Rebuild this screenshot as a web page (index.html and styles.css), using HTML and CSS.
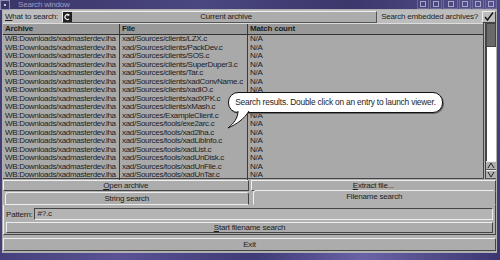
FILE: index.html
```html
<!DOCTYPE html>
<html lang="en">
<head>
  <meta charset="UTF-8" />
  <title>Search window</title>
  <link rel="stylesheet" href="styles.css">
</head>
<body>
  <div class="window">
    <header class="titlebar">
      <span class="close-gadget"><span></span></span>
      <span class="title">Search window</span>
      <div class="gadgets">
        <span class="gadget"><span class="g-mark"></span></span>
        <span class="gadget"><span class="g-mark"></span></span>
        <span class="gadget wide"><span class="g-mark"></span></span>
        <span class="gadget"><span class="g-mark"></span></span>
        <span class="gadget"><span class="g-mark"></span></span>
        <span class="gadget"><span class="g-mark"></span></span>
      </div>
    </header>

    <main class="content">
      <div class="search-row">
        <span class="label"><u>W</u>hat to search:</span>
        <div class="cycle">
          <svg class="cycle-icon" width="9" height="10" viewBox="0 0 9 10">
            <rect x="0" y="0" width="9" height="10" fill="#222"/>
            <path d="M6 3 A2.5 2.5 0 1 0 6 7" stroke="#eee" stroke-width="1.2" fill="none"/>
            <path d="M4.5 1.5 L7 3 L4.5 4.5 Z" fill="#eee"/>
          </svg>
          <span class="cycle-label">Current archive</span>
        </div>
        <span class="label">Search embedded archives?</span>
        <span class="checkbox">
          <svg width="10" height="9" viewBox="0 0 10 9">
            <path d="M1 5 L3.5 8 L9 0.5" stroke="#111" stroke-width="1.4" fill="none"/>
          </svg>
        </span>
      </div>

      <section class="results">
        <div class="list">
          <div class="row head">
            <span>Archive</span><span>File</span><span>Match count</span>
          </div>
          <div id="rows"></div>
        </div>
        <div class="scrollbar">
          <div class="knob"></div>
          <div class="track"></div>
          <div class="arrow">
            <svg width="8" height="7" viewBox="0 0 8 7"><path d="M1 6 L4 1 L7 6" stroke="#222" fill="none"/></svg>
          </div>
          <div class="arrow">
            <svg width="8" height="7" viewBox="0 0 8 7"><path d="M1 1 L4 6 L7 1" stroke="#222" fill="none"/></svg>
          </div>
        </div>
        <div class="bubble">Search results. Double click on an entry to launch viewer.</div>
        <svg class="bubble-tail" width="26" height="18" viewBox="0 0 26 18">
          <path d="M11 0 C11 7 7 12 1 17 C10 13 17 8 22 0 Z" fill="#fff"/>
          <path d="M11 0 C11 7 7 12 1 17 C10 13 17 8 22 0" stroke="#111" fill="none"/>
        </svg>
      </section>

      <div class="button-row">
        <button class="btn"><u>O</u>pen archive</button>
        <button class="btn"><u>E</u>xtract file...</button>
      </div>

      <div class="tabs">
        <div class="tab">String search</div>
        <div class="tab active">Filename search</div>
      </div>
      <div class="tab-panel">
        <div class="pattern-row">
          <span class="label">Pattern:</span>
          <div class="string-field">#?.c</div>
        </div>
        <button class="btn start"><u>S</u>tart filename search</button>
      </div>

      <button class="btn exit">Exit</button>
    </main>
  </div>

  <script>
    const archive = "WB:Downloads/xadmasterdev.lha";
    const files = [
      "clients/LZX.c", "clients/PackDev.c", "clients/SOS.c", "clients/SuperDuper3.c",
      "clients/Tar.c", "clients/xadConvName.c", "clients/xadIO.c", "clients/xadXPK.c",
      "clients/xMash.c", "ExampleClient.c", "tools/exe2arc.c", "tools/xad2lha.c",
      "tools/xadLibInfo.c", "tools/xadList.c", "tools/xadUnDisk.c", "tools/xadUnFile.c",
      "tools/xadUnTar.c"
    ];
    const rows = document.getElementById("rows");

    files.forEach(file => {
      const row = document.createElement("div");
      row.className = "row";
      row.innerHTML = `<span>${archive}</span><span>xad/Sources/${file}</span><span>N/A</span>`;
      rows.appendChild(row);
    });
  </script>
</body>
</html>
```

FILE: styles.css
```css
body {
  margin: 0;
  width: 500px;
  height: 260px;
  overflow: hidden;
  font-family: "Liberation Sans", Arial, sans-serif;
  font-size: 8px;
  letter-spacing: -0.2px;
  color: #1c1c1c;
  background: linear-gradient(100deg, #3d3972 0%, #5a5294 30%, #3f3a78 55%, #6a63a6 75%, #3b3670 100%);
}

.window {
  margin: 0 3px 0 2px;
}

.titlebar {
  height: 9px;
  display: flex;
  align-items: center;
  background: linear-gradient(90deg, #3a3668, #4a4680 40%, #3c386c 70%, #55518c);
}

.close-gadget {
  width: 8px;
  height: 8px;
  margin-left: -2px;
  border: 1px solid #8a88b0;
  display: flex;
  align-items: center;
  justify-content: center;
}

.close-gadget span {
  width: 2px;
  height: 2px;
  background: #c8c8dc;
}

.title {
  margin-left: 8px;
  color: #9e9cc0;
  line-height: 9px;
}

.gadgets {
  margin-left: auto;
  display: flex;
  gap: 1px;
  height: 9px;
}

.gadget {
  width: 10px;
  height: 8px;
  border: 1px solid #6c6a98;
  border-top: none;
  display: flex;
  align-items: center;
  justify-content: center;
}

.gadget.wide {
  width: 13px;
}

.g-mark {
  width: 4px;
  height: 4px;
  border: 1px solid #a8a6c8;
}

.content {
  background: #b0b0b0;
  padding: 1px;
  box-sizing: border-box;
  height: 244px;
}

.label u,
.btn u {
  text-decoration: underline;
}

.search-row {
  height: 13px;
  display: flex;
  align-items: center;
  gap: 4px;
  padding-left: 2px;
  background: #bdbdbd;
}

.cycle {
  flex: 1;
  height: 10px;
  display: flex;
  align-items: center;
  border-top: 1px solid #eee;
  border-left: 1px solid #eee;
  border-bottom: 1px solid #555;
  border-right: 1px solid #555;
  background: #acacac;
}

.cycle-icon {
  display: block;
}

.cycle-label {
  flex: 1;
  text-align: center;
  padding-left: 4px;
}

.checkbox {
  width: 12px;
  height: 10px;
  border-top: 1px solid #eee;
  border-left: 1px solid #eee;
  border-bottom: 1px solid #444;
  border-right: 1px solid #444;
  display: flex;
  align-items: center;
  justify-content: center;
}

.results {
  position: relative;
  height: 156px;
  display: flex;
  gap: 1px;
}

.list {
  flex: 1;
  background: #a9a9a9;
  border-right: 1px solid #444;
  border-bottom: 1px solid #444;
}

.row {
  display: grid;
  grid-template-columns: 117px 128px 1fr;
  height: 8.5px;
  line-height: 8.5px;
  letter-spacing: -0.3px;
}

.row span {
  padding-left: 2px;
  white-space: nowrap;
  overflow: hidden;
}

.row span:nth-child(1),
.row span:nth-child(2) {
  border-right: 1px solid #3a3a3a;
}

.row.head {
  height: 10px;
  line-height: 10px;
  letter-spacing: -0.2px;
  font-weight: bold;
  background: #999;
  border-top: 1px solid #ddd;
  border-bottom: 1px solid #333;
}

.scrollbar {
  width: 10px;
  display: flex;
  flex-direction: column;
  border-left: 1px solid #444;
}

.knob {
  height: 22px;
  background: #6a6a6a;
  border: 1px solid #444;
}

.track {
  flex: 1;
  background: #fff;
  border-left: 1px solid #444;
}

.arrow {
  height: 7px;
  display: flex;
  align-items: center;
  justify-content: center;
  border-top: 1px solid #eee;
  border-bottom: 1px solid #555;
}

.bubble {
  position: absolute;
  z-index: 1;
  left: 225px;
  top: 69px;
  width: 213px;
  height: 19px;
  line-height: 19px;
  font-size: 8.4px;
  text-align: center;
  background: #fff;
  border: 1px solid #111;
  border-radius: 10px;
  box-shadow: 1px 1px 0 #666;
}

.bubble-tail {
  position: absolute;
  z-index: 2;
  left: 224px;
  top: 88px;
}

.button-row {
  display: flex;
  gap: 2px;
  margin-top: 1px;
}

.btn {
  font: inherit;
  letter-spacing: inherit;
  color: inherit;
  background: #acacac;
  border-top: 1px solid #eee;
  border-left: 1px solid #eee;
  border-bottom: 1px solid #444;
  border-right: 1px solid #444;
  padding: 0;
  height: 11px;
  line-height: 9px;
  text-align: center;
}

.button-row .btn {
  flex: 1;
}

.tabs {
  display: flex;
  gap: 4px;
  padding: 0 0 0 2px;
  height: 14px;
  align-items: flex-end;
}

.tab {
  flex: 1;
  height: 11px;
  line-height: 11px;
  text-align: center;
  background: #acacac;
  border-top: 1px solid #eee;
  border-left: 1px solid #eee;
  border-right: 1px solid #444;
  border-bottom: 1px solid #eee;
  border-radius: 3px 3px 0 0;
}

.tab.active {
  height: 13px;
  line-height: 12px;
  background: #b0b0b0;
  border-bottom-color: #b0b0b0;
}

.tab-panel {
  border-left: 1px solid #eee;
  border-right: 1px solid #444;
  border-bottom: 1px solid #444;
  padding: 3px 2px 1px 2px;
  display: flex;
  flex-direction: column;
  gap: 2px;
}

.pattern-row {
  display: flex;
  align-items: center;
  gap: 2px;
}

.string-field {
  flex: 1;
  height: 10px;
  line-height: 10px;
  padding-left: 2px;
  background: #b4b4b4;
  border-top: 1px solid #444;
  border-left: 1px solid #444;
  border-bottom: 1px solid #eee;
  border-right: 1px solid #eee;
}

.btn.start {
  width: 100%;
  height: 11px;
}

.btn.exit {
  width: 100%;
  height: 13px;
  margin-top: 3px;
  line-height: 11px;
}
```
